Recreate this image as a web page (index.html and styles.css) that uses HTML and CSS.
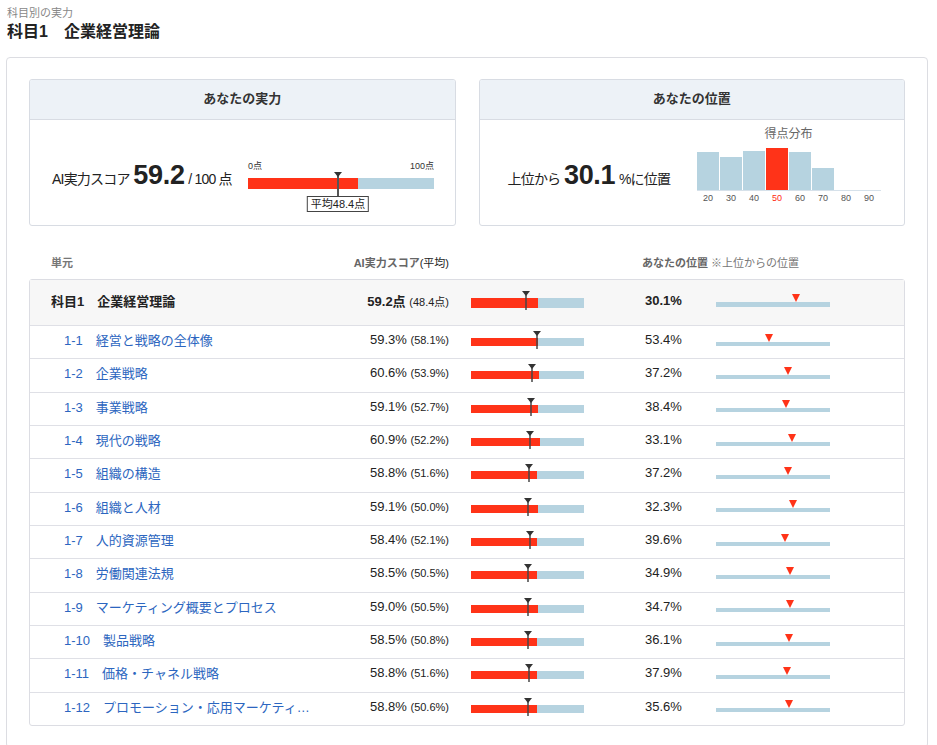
FILE: index.html
```html
<!DOCTYPE html>
<html lang="ja">
<head>
<meta charset="utf-8">
<title>科目別の実力</title>
<link rel="stylesheet" href="styles.css">
</head>
<body>
<div class="page">
  <div class="eyebrow">科目別の実力</div>
  <h1 class="title">科目1　企業経営理論</h1>

  <section class="panel">
    <div class="cards">
      <div class="card">
        <div class="card-head">あなたの実力</div>
        <div class="card-body">
          <div class="headline headline-score"><span class="lbl">AI実力スコア</span> <span class="big">59.2</span> <span class="lbl">/ 100 点</span></div>
          <div class="gauge">
            <div class="gauge-labels"><span>0点</span><span>100点</span></div>
            <div class="gauge-bar">
              <div class="gauge-fill" style="width:59.2%"></div>
              <div class="gauge-avg" style="left:48.4%"><span class="avg-box">平均48.4点</span></div>
            </div>
          </div>
        </div>
      </div>

      <div class="card">
        <div class="card-head">あなたの位置</div>
        <div class="card-body">
          <div class="headline headline-rank"><span class="lbl">上位から</span> <span class="big">30.1</span> <span class="lbl">%に位置</span></div>
          <div class="hist">
            <div class="hist-title">得点分布</div>
            <div class="hist-bars">
              <div class="hb" style="height:38px"></div>
              <div class="hb" style="height:33px"></div>
              <div class="hb" style="height:39px"></div>
              <div class="hb hb-me" style="height:42px"></div>
              <div class="hb" style="height:38px"></div>
              <div class="hb" style="height:22px"></div>
              <div class="hb" style="height:0"></div>
              <div class="hb" style="height:0"></div>
            </div>
            <div class="hist-axis">
              <span>20</span><span>30</span><span>40</span><span class="me">50</span><span>60</span><span>70</span><span>80</span><span>90</span>
            </div>
          </div>
        </div>
      </div>
    </div>

    <div class="thead">
      <div class="c-unit">単元</div>
      <div class="c-score"><b>AI実力スコア</b>(平均)</div>
      <div class="c-posh"><b>あなたの位置</b> ※上位からの位置</div>
    </div>

    <div class="tbl">
      <div class="row sum">
        <div class="c-unit"><span class="unit-text">科目1　企業経営理論</span></div>
        <div class="c-score"><b>59.2点</b> <small>(48.4点)</small></div>
        <div class="c-bar"><div class="mbar"><div class="mfill" style="width:59.2%"></div><div class="mavg" style="left:48.4%"></div></div></div>
        <div class="c-pct"><b>30.1%</b></div>
        <div class="c-pos"><div class="pbar"><div class="pin" style="left:69.9%"></div></div></div>
      </div>

      <div class="row">
        <div class="c-unit"><a class="unit-text" href="#">1-1　経営と戦略の全体像</a></div>
        <div class="c-score">59.3% <small>(58.1%)</small></div>
        <div class="c-bar"><div class="mbar"><div class="mfill" style="width:59.3%"></div><div class="mavg" style="left:58.1%"></div></div></div>
        <div class="c-pct">53.4%</div>
        <div class="c-pos"><div class="pbar"><div class="pin" style="left:46.6%"></div></div></div>
      </div>

      <div class="row">
        <div class="c-unit"><a class="unit-text" href="#">1-2　企業戦略</a></div>
        <div class="c-score">60.6% <small>(53.9%)</small></div>
        <div class="c-bar"><div class="mbar"><div class="mfill" style="width:60.6%"></div><div class="mavg" style="left:53.9%"></div></div></div>
        <div class="c-pct">37.2%</div>
        <div class="c-pos"><div class="pbar"><div class="pin" style="left:62.8%"></div></div></div>
      </div>

      <div class="row">
        <div class="c-unit"><a class="unit-text" href="#">1-3　事業戦略</a></div>
        <div class="c-score">59.1% <small>(52.7%)</small></div>
        <div class="c-bar"><div class="mbar"><div class="mfill" style="width:59.1%"></div><div class="mavg" style="left:52.7%"></div></div></div>
        <div class="c-pct">38.4%</div>
        <div class="c-pos"><div class="pbar"><div class="pin" style="left:61.6%"></div></div></div>
      </div>

      <div class="row">
        <div class="c-unit"><a class="unit-text" href="#">1-4　現代の戦略</a></div>
        <div class="c-score">60.9% <small>(52.2%)</small></div>
        <div class="c-bar"><div class="mbar"><div class="mfill" style="width:60.9%"></div><div class="mavg" style="left:52.2%"></div></div></div>
        <div class="c-pct">33.1%</div>
        <div class="c-pos"><div class="pbar"><div class="pin" style="left:66.9%"></div></div></div>
      </div>

      <div class="row">
        <div class="c-unit"><a class="unit-text" href="#">1-5　組織の構造</a></div>
        <div class="c-score">58.8% <small>(51.6%)</small></div>
        <div class="c-bar"><div class="mbar"><div class="mfill" style="width:58.8%"></div><div class="mavg" style="left:51.6%"></div></div></div>
        <div class="c-pct">37.2%</div>
        <div class="c-pos"><div class="pbar"><div class="pin" style="left:62.8%"></div></div></div>
      </div>

      <div class="row">
        <div class="c-unit"><a class="unit-text" href="#">1-6　組織と人材</a></div>
        <div class="c-score">59.1% <small>(50.0%)</small></div>
        <div class="c-bar"><div class="mbar"><div class="mfill" style="width:59.1%"></div><div class="mavg" style="left:50.0%"></div></div></div>
        <div class="c-pct">32.3%</div>
        <div class="c-pos"><div class="pbar"><div class="pin" style="left:67.7%"></div></div></div>
      </div>

      <div class="row">
        <div class="c-unit"><a class="unit-text" href="#">1-7　人的資源管理</a></div>
        <div class="c-score">58.4% <small>(52.1%)</small></div>
        <div class="c-bar"><div class="mbar"><div class="mfill" style="width:58.4%"></div><div class="mavg" style="left:52.1%"></div></div></div>
        <div class="c-pct">39.6%</div>
        <div class="c-pos"><div class="pbar"><div class="pin" style="left:60.4%"></div></div></div>
      </div>

      <div class="row">
        <div class="c-unit"><a class="unit-text" href="#">1-8　労働関連法規</a></div>
        <div class="c-score">58.5% <small>(50.5%)</small></div>
        <div class="c-bar"><div class="mbar"><div class="mfill" style="width:58.5%"></div><div class="mavg" style="left:50.5%"></div></div></div>
        <div class="c-pct">34.9%</div>
        <div class="c-pos"><div class="pbar"><div class="pin" style="left:65.1%"></div></div></div>
      </div>

      <div class="row">
        <div class="c-unit"><a class="unit-text" href="#">1-9　マーケティング概要とプロセス</a></div>
        <div class="c-score">59.0% <small>(50.5%)</small></div>
        <div class="c-bar"><div class="mbar"><div class="mfill" style="width:59.0%"></div><div class="mavg" style="left:50.5%"></div></div></div>
        <div class="c-pct">34.7%</div>
        <div class="c-pos"><div class="pbar"><div class="pin" style="left:65.3%"></div></div></div>
      </div>

      <div class="row">
        <div class="c-unit"><a class="unit-text" href="#">1-10　製品戦略</a></div>
        <div class="c-score">58.5% <small>(50.8%)</small></div>
        <div class="c-bar"><div class="mbar"><div class="mfill" style="width:58.5%"></div><div class="mavg" style="left:50.8%"></div></div></div>
        <div class="c-pct">36.1%</div>
        <div class="c-pos"><div class="pbar"><div class="pin" style="left:63.9%"></div></div></div>
      </div>

      <div class="row">
        <div class="c-unit"><a class="unit-text" href="#">1-11　価格・チャネル戦略</a></div>
        <div class="c-score">58.8% <small>(51.6%)</small></div>
        <div class="c-bar"><div class="mbar"><div class="mfill" style="width:58.8%"></div><div class="mavg" style="left:51.6%"></div></div></div>
        <div class="c-pct">37.9%</div>
        <div class="c-pos"><div class="pbar"><div class="pin" style="left:62.1%"></div></div></div>
      </div>

      <div class="row">
        <div class="c-unit"><a class="unit-text" href="#">1-12　プロモーション・応用マーケティング</a></div>
        <div class="c-score">58.8% <small>(50.6%)</small></div>
        <div class="c-bar"><div class="mbar"><div class="mfill" style="width:58.8%"></div><div class="mavg" style="left:50.6%"></div></div></div>
        <div class="c-pct">35.6%</div>
        <div class="c-pos"><div class="pbar"><div class="pin" style="left:64.4%"></div></div></div>
      </div>
    </div>
  </section>
</div>
</body>
</html>
```

FILE: styles.css
```css
* { box-sizing: border-box; }

html, body {
  margin: 0;
  overflow: hidden;
}

body {
  background: #fff;
  color: #222;
  font-family: "Liberation Sans", "Noto Sans CJK JP", sans-serif;
  font-size: 13px;
}

.page {
  padding: 0 0 0 6px;
}

.eyebrow {
  margin-top: 6px;
  padding-left: 1px;
  font-size: 11px;
  line-height: 15px;
  color: #888;
}

.title {
  margin: 0;
  padding-left: 1px;
  font-size: 16px;
  line-height: 22px;
  font-weight: bold;
  color: #222;
}

.panel {
  margin-top: 14px;
  width: 922px;
  border: 1px solid #dcdde2;
  border-radius: 4px;
  padding: 21px 22px 21px 22px;
}

.cards {
  display: grid;
  grid-template-columns: 1fr 1fr;
  column-gap: 23px;
}

.card {
  border: 1px solid #d8dce3;
  border-radius: 3px;
  height: 147px;
  overflow: hidden;
}

.card-head {
  height: 40px;
  background: #edf2f7;
  border-bottom: 1px solid #d8dce3;
  text-align: center;
  font-size: 13px;
  font-weight: bold;
  line-height: 38px;
  color: #333;
}

.card-body {
  display: flex;
  align-items: flex-start;
  height: 105px;
}

.card-body:has(.headline-score) {
  padding: 40px 0 0 22px;
}

.card-body:has(.headline-rank) {
  padding: 6px 0 0 28px;
}

.headline {
  white-space: nowrap;
  color: #222;
  line-height: 30px;
}

.headline-score {
  width: 196px;
  margin-top: 0;
}

.headline-rank {
  width: 189px;
  margin-top: 34px;
}

.lbl {
  font-size: 14px;
  letter-spacing: -0.8px;
}

.big {
  font-size: 27px;
  font-weight: bold;
  letter-spacing: -0.3px;
}

/* gauge */
.gauge {
  width: 186px;
}

.gauge-labels {
  display: flex;
  justify-content: space-between;
  font-size: 9px;
  line-height: 12px;
  color: #333;
}

.gauge-bar {
  position: relative;
  margin-top: 6px;
  height: 11px;
  background: #b6d3e0;
}

.gauge-fill {
  height: 100%;
  background: #ff3318;
}

.gauge-avg {
  position: absolute;
  top: -6px;
  height: 24px;
  width: 2px;
  margin-left: -1px;
  background: #555;
}

.gauge-avg::before {
  content: "";
  position: absolute;
  top: 0;
  left: -3px;
  border-left: 4px solid transparent;
  border-right: 4px solid transparent;
  border-top: 5px solid #333;
}

.avg-box {
  position: absolute;
  top: 24px;
  left: 1px;
  transform: translateX(-50%);
  white-space: nowrap;
  background: #fff;
  border: 1px solid #444;
  padding: 0 3px;
  font-size: 11px;
  line-height: 14px;
  color: #222;
}

/* histogram */
.hist {
  width: 184px;
}

.hist-title {
  text-align: center;
  font-size: 12px;
  line-height: 16px;
  color: #666;
}

.hist-bars {
  display: flex;
  align-items: flex-end;
  height: 49px;
  border-bottom: 1px solid #d6e1ea;
}

.hb {
  flex: 0 0 22px;
  margin-right: 1px;
  background: #b6d3e0;
}

.hb-me {
  background: #ff3318;
}

.hist-axis {
  display: flex;
  font-size: 9px;
  line-height: 15px;
  color: #555;
}

.hist-axis span {
  width: 23px;
  text-align: center;
}

.hist-axis .me {
  color: #ff2a10;
}

/* table */
.thead {
  display: flex;
  align-items: center;
  margin-top: 20px;
  height: 33px;
  padding: 0 1px 2px;
  font-size: 11px;
  color: #777;
  white-space: nowrap;
}

.thead b {
  color: #666;
}

.thead .c-unit {
  font-weight: bold;
}

.c-posh {
  margin-left: 193px;
}

.tbl {
  border: 1px solid #dcdde3;
  border-radius: 3px;
}

.row {
  display: flex;
  align-items: center;
  height: 33.33px;
  border-top: 1px solid #dfe0e6;
}

.row.sum {
  height: 45px;
  border-top: 0;
  background: #f7f7f7;
}

.row .c-unit,
.row .c-score,
.row .c-pct {
  padding-bottom: 5px;
}

.c-unit {
  width: 310px;
  padding-left: 21px;
  padding-right: 28px;
  white-space: nowrap;
  overflow: hidden;
}

.row .c-unit {
  padding-left: 34px;
}

.row.sum .c-unit {
  padding-left: 21px;
}

.unit-text {
  display: block;
  overflow: hidden;
  text-overflow: ellipsis;
  white-space: nowrap;
  color: #2c66c0;
  text-decoration: none;
}

.sum .unit-text {
  color: #222;
  font-weight: bold;
}

.c-score {
  width: 109px;
  text-align: right;
  white-space: nowrap;
  color: #222;
}

.c-score small {
  font-size: 11px;
}

.c-bar {
  margin-left: 22px;
  width: 113px;
}

.mbar {
  position: relative;
  height: 8px;
  background: #b6d3e0;
}

.sum .mbar {
  height: 10px;
}

.mfill {
  height: 100%;
  background: #ff3318;
}

.mavg {
  position: absolute;
  top: -7px;
  bottom: -3px;
  width: 2px;
  margin-left: -1px;
  background: rgba(70, 70, 70, 0.75);
}

.sum .mavg {
  bottom: -2px;
}

.mavg::before {
  content: "";
  position: absolute;
  top: 0;
  left: -3px;
  border-left: 4px solid transparent;
  border-right: 4px solid transparent;
  border-top: 5px solid #333;
}

.c-pct {
  margin-left: 61px;
  width: 71px;
  color: #222;
}

.c-pos {
  width: 114px;
}

.pbar {
  position: relative;
  height: 4px;
  margin-top: 3px;
  background: #b6d3e0;
}

.sum .pbar {
  height: 5px;
}

.pin {
  position: absolute;
  bottom: 100%;
  margin-left: -4px;
  border-left: 4px solid transparent;
  border-right: 4px solid transparent;
  border-top: 8px solid #ff3318;
}
```
